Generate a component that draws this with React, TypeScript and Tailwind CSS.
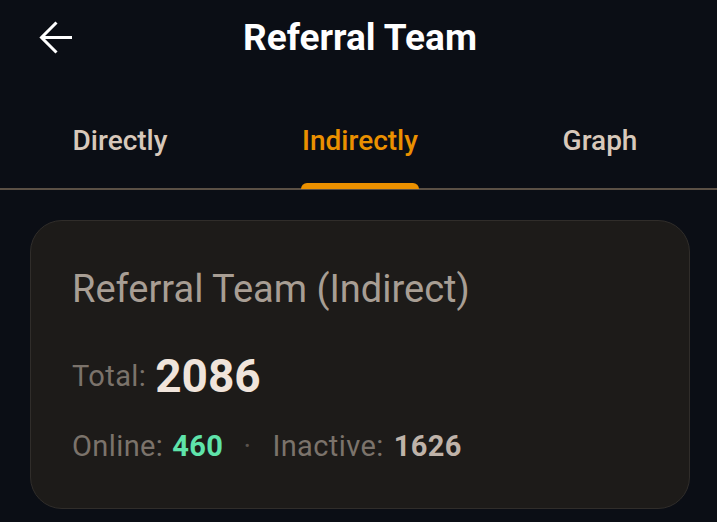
import { useState } from 'react'

const tabs = ['Directly', 'Indirectly', 'Graph']

function BackArrow() {
  return (
    <svg width="36" height="36" viewBox="0 0 36 36" fill="none" className="block">
      <path d="M33 17.5H3" stroke="#ffffff" strokeWidth="3" />
      <path d="M17.5 2.5L2.5 17.5L17.5 32.5" stroke="#ffffff" strokeWidth="3" strokeLinejoin="miter" />
    </svg>
  )
}

export default function App() {
  const [active, setActive] = useState(1)

  return (
    <div className="min-h-[522px] w-full overflow-hidden bg-[#0b0e15] font-['Roboto',sans-serif]">
      <div className="w-[720px]">
        {/* Header */}
        <div className="grid h-[76px] grid-cols-[1fr_auto_1fr] items-center">
          <div className="pl-[39px]">
            <BackArrow />
          </div>
          <h1 className="text-[37px] font-bold leading-[40px] text-white">Referral Team</h1>
          <div />
        </div>

        {/* Tabs */}
        <div className="grid h-[114px] grid-cols-3 border-b-2 border-[#5b5045]">
          {tabs.map((tab, i) => (
            <button
              key={tab}
              onClick={() => setActive(i)}
              className="flex h-full flex-col items-center justify-end"
            >
              <span
                className={`text-[28px] font-medium leading-[33px] ${
                  i === active ? 'text-[#eb9000]' : 'text-[#d8c8ba]'
                }`}
              >
                {tab}
              </span>
              <span
                className={`mt-[25px] h-[6px] translate-y-[1px] rounded-t-[6px] ${
                  i === active ? 'w-[118px] bg-[#eb9000]' : 'w-0 bg-transparent'
                }`}
              />
            </button>
          ))}
        </div>

        {/* Card */}
        <div className="mx-[30px] mt-[30px] rounded-[32px] border border-[#302d2a] bg-[#1d1b19] pb-[45px] pl-[41px] pt-[46px]">
          <div className="text-[38px] leading-[44px] text-[#a89e94]">Referral Team (Indirect)</div>

          <div className="mt-[38px] flex items-center gap-[9px]">
            <span className="text-[29px] leading-[33px] tracking-[0.4px] text-[#7b736b]">Total:</span>
            <span className="text-[46px] font-bold leading-[54px] text-[#f0e4db]">2086</span>
          </div>

          <div className="mt-[27px] flex items-center text-[29px] leading-[33px] tracking-[0.4px]">
            <span className="text-[#7b736b]">Online:</span>
            <span className="ml-[9px] font-bold text-[#5fe3aa]">460</span>
            <span className="ml-[20px] mr-[21px] text-[#5a534d]">·</span>
            <span className="text-[#7b736b]">Inactive:</span>
            <span className="ml-[10px] font-bold text-[#bfb3a9]">1626</span>
          </div>
        </div>
      </div>
    </div>
  )
}
